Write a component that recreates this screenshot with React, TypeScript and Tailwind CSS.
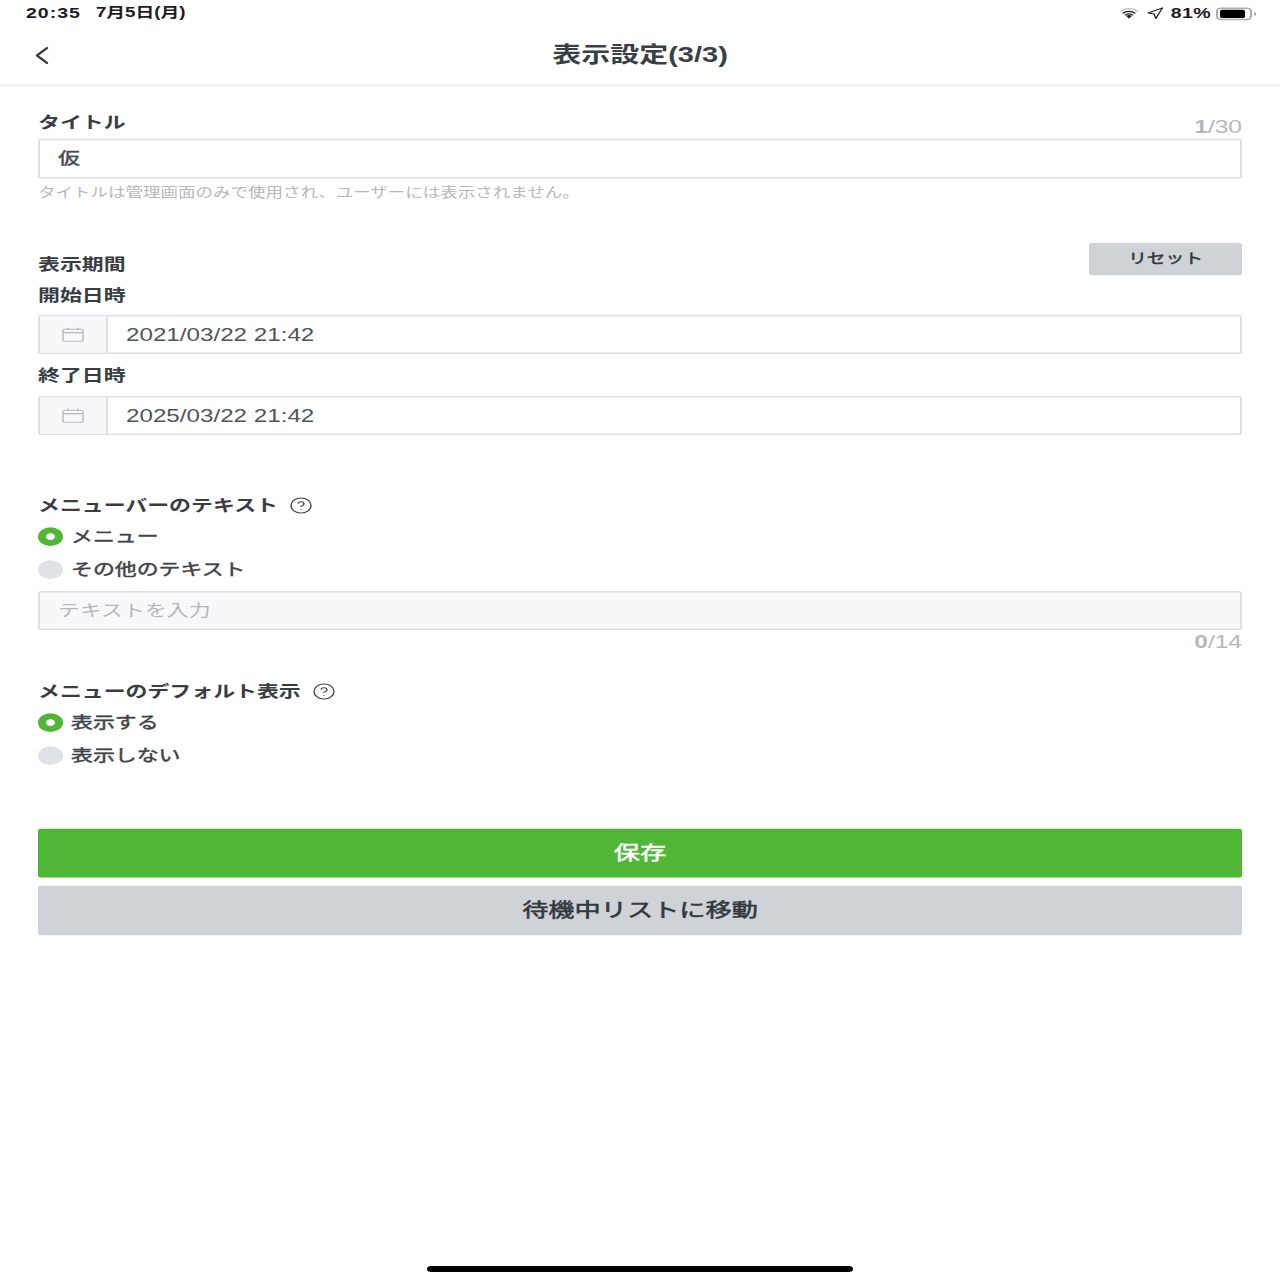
import { ChevronLeft, CircleHelp, Navigation } from "lucide-react";

// The reference is a tall tablet capture squeezed to a square, so the page is
// laid out at its real 1280x1706 size and scaled down vertically once.

function Label({ text, help }: { text: string; help?: boolean }) {
  return (
    <div className="flex h-[30px] items-center pt-[2px] text-[21.9px] leading-[30px] font-semibold text-[#383d43]">
      <span>{text}</span>
      {help && <CircleHelp size={24} strokeWidth={1.4} className="ml-[11px] text-[#3f4449]" />}
    </div>
  );
}

function Radio({ text, on, className }: { text: string; on?: boolean; className: string }) {
  return (
    <div className={`flex h-[30px] items-center gap-[8px] text-[21.9px] text-[#3f444a] [-webkit-text-stroke:0.6px_currentColor] ${className}`}>
      {on ? (
        <span className="h-[25px] w-[25px] rounded-full border-[8px] border-[#4fb636] bg-white" />
      ) : (
        <span className="h-[25px] w-[25px] rounded-full bg-[#dfe2e6]" />
      )}
      <span>{text}</span>
    </div>
  );
}

function DateField({ value, className }: { value: string; className: string }) {
  return (
    <div className={`flex h-[52px] rounded-[3px] border-2 border-[#dcdfe3] ${className}`}>
      <div className="flex w-[68px] items-center justify-center border-r-2 border-[#dcdfe3] bg-[#f7f8f9]">
        <svg width="22" height="20" viewBox="0 0 22 20" fill="none" stroke="#b4b9bf" strokeWidth="1.4">
          <rect x="1" y="3" width="20" height="16" rx="1.5" />
          <path d="M1 7.5h20M6 1v3M16 1v3" />
        </svg>
      </div>
      <div className="flex items-center pl-[18px] text-[24.2px] text-[#50555b]">{value}</div>
    </div>
  );
}

function StatusBar() {
  return (
    <div className="flex h-[34px] items-center justify-between pt-[2px] pr-[24px] pl-[26px] text-[#1c1c1e]">
      <div className="flex gap-[15px] text-[19.5px] font-bold">
        <span className="tracking-[1px]">20:35</span>
        <span className="text-[18.8px]">7月5日(月)</span>
      </div>
      <div className="flex items-center">
        <svg width="20" height="16" viewBox="0 0 20 14" fill="#1c1c1e">
          <path d="M10 13.5 7.2 10.4a4 4 0 0 1 5.6 0z" />
          <path d="M5.4 8.7a6.8 6.8 0 0 1 9.2 0l-1.1 1.2a5.2 5.2 0 0 0-7 0z" />
          <path d="M3 6.2a10 10 0 0 1 14 0l-1.2 1.2a8.4 8.4 0 0 0-11.6 0z" />
          <path d="M.5 3.6a13.5 13.5 0 0 1 19 0l-1.2 1.2a11.8 11.8 0 0 0-16.6 0z" opacity=".3" />
        </svg>
        <Navigation size={18} strokeWidth={1.8} className="ml-[7px]" />
        <span className="ml-[7px] text-[19.5px] font-bold tracking-[0.4px]">81%</span>
        <div className="ml-[5px] flex h-[17px] w-[36px] items-center rounded-[5px] border-2 border-[#a9acb0] px-[2px]">
          <div className="h-[11px] w-[25px] rounded-[2px] bg-black" />
        </div>
        <div className="ml-[2px] h-[5px] w-[2px] rounded-r-full bg-[#a9acb0]" />
      </div>
    </div>
  );
}

export default function App() {
  return (
    <div className="h-[1280px] w-[1280px] overflow-hidden bg-white font-['Liberation_Sans','Noto_Sans_CJK_JP',sans-serif]">
      <div className="flex h-[1706px] origin-top scale-y-75 flex-col">
        <StatusBar />
        <div className="relative flex h-[81px] items-center justify-center border-b-2 border-[#e8e9ed]">
          <ChevronLeft size={40} strokeWidth={1.5} className="absolute left-[22px] text-[#33373c]" />
          <span className="text-[29px] font-semibold text-[#3a3f45]">表示設定(3/3)</span>
        </div>

        <div className="flex flex-1 flex-col px-[38px] pb-[10px]">
          <div className="mt-[33px] flex items-start justify-between">
            <Label text="タイトル" />
            <span className="mt-[6px] -mb-[6px] text-[24.5px] leading-[30px] text-[#b4b8bd]">
              <b>1</b>/30
            </span>
          </div>
          <div className="mt-[7px] flex h-[53px] items-center rounded-[3px] border-2 border-[#dcdfe3] pl-[18px] text-[21.9px] text-[#44494f] [-webkit-text-stroke:0.6px_currentColor]">
            仮
          </div>
          <div className="mt-[6px] h-[24px] text-[17.5px] leading-[24px] text-[#b4b8bd]">
            タイトルは管理画面のみで使用され、ユーザーには表示されません。
          </div>

          <div className="mt-[56px] flex items-end justify-between">
            <Label text="表示期間" />
            <button className="h-[43px] w-[153px] rounded-[3px] bg-[#cfd2d6] text-[18.7px] text-[#33383e] [-webkit-text-stroke:0.6px_currentColor]">
              リセット
            </button>
          </div>
          <div className="mt-[11px]">
            <Label text="開始日時" />
          </div>
          <DateField value="2021/03/22 21:42" className="mt-[12px]" />
          <div className="mt-[13px]">
            <Label text="終了日時" />
          </div>
          <DateField value="2025/03/22 21:42" className="mt-[13px]" />

          <div className="mt-[78px]">
            <Label text="メニューバーのテキスト" help />
          </div>
          <Radio text="メニュー" on className="mt-[12px]" />
          <Radio text="その他のテキスト" className="mt-[14px]" />
          <div className="mt-[14px] flex h-[52px] items-center rounded-[3px] border-2 border-[#dcdfe3] bg-[#f7f8f9] pl-[18px] text-[21.9px] text-[#b4b8bd]">
            テキストを入力
          </div>
          <div className="mt-[3px] h-[24px] pt-[1px] text-right text-[24.5px] leading-[24px] text-[#b4b8bd]">
            <b>0</b>/14
          </div>

          <div className="mt-[39px]">
            <Label text="メニューのデフォルト表示" help />
          </div>
          <Radio text="表示する" on className="mt-[12px]" />
          <Radio text="表示しない" className="mt-[14px]" />

          <button className="mt-[83px] h-[65px] rounded-[3px] bg-[#4fb636] text-[26.2px] text-white [-webkit-text-stroke:0.7px_currentColor]">
            保存
          </button>
          <button className="mt-[11px] h-[66px] rounded-[3px] bg-[#cfd2d6] text-[26.2px] text-[#33383e] [-webkit-text-stroke:0.7px_currentColor]">
            待機中リストに移動
          </button>

          <div className="mx-auto mt-auto h-[8px] w-[426px] rounded-full bg-black" />
        </div>
      </div>
    </div>
  );
}
